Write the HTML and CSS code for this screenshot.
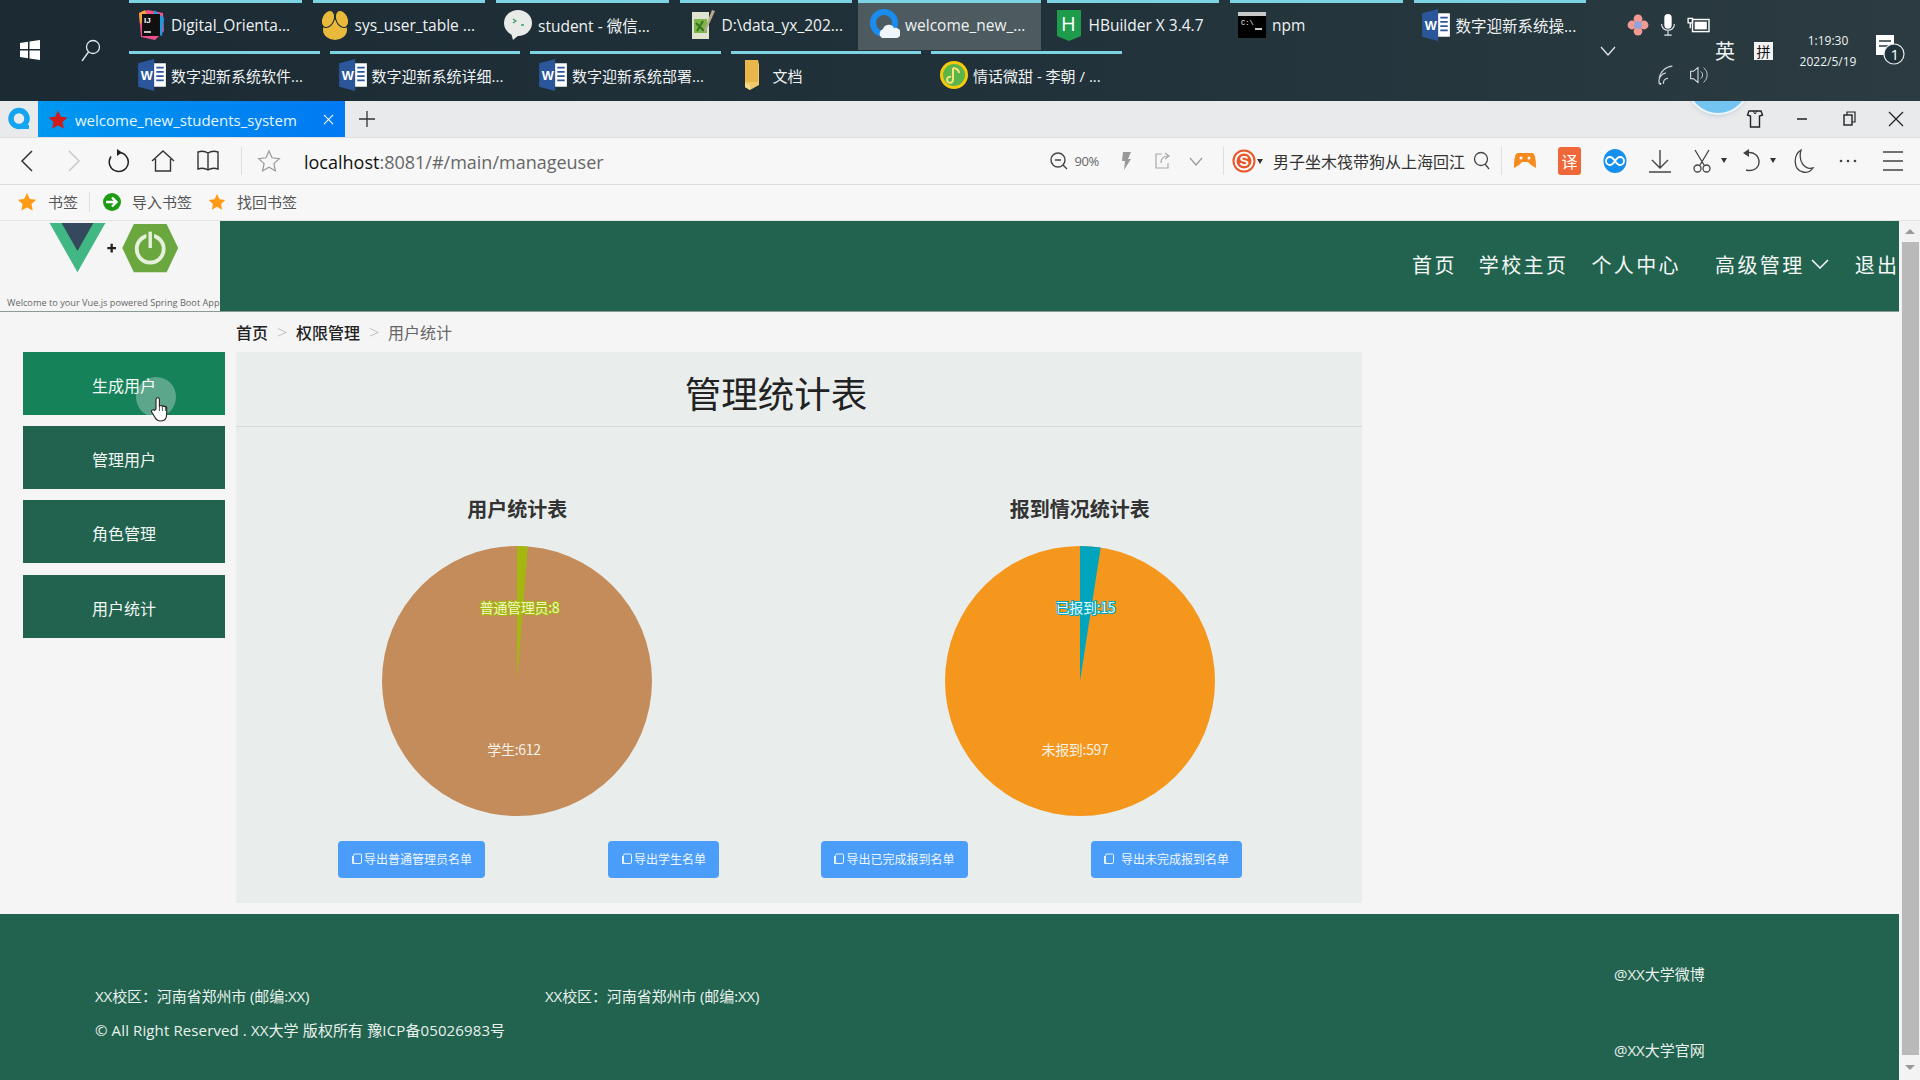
FILE: index.html
```html
<!DOCTYPE html>
<html lang="zh-CN">
<head>
<meta charset="utf-8">
<title>welcome_new_students_system</title>
<link rel="stylesheet" href="styles.css">
</head>
<body>
<svg class="defs" width="0" height="0" aria-hidden="true">
  <symbol id="word" viewBox="0 0 28 30">
    <path d="M1 4 16 0v30L1 26z" fill="#2b579a"/>
    <path d="M16 4h11v22H16z" fill="#fff"/>
    <path d="M18 8h7M18 12h7M18 16h7M18 20h7" stroke="#2b579a" stroke-width="1.6"/>
    <text x="3.5" y="20" class="word-w">W</text>
  </symbol>
  <symbol id="docs" viewBox="0 0 12 12">
    <path d="M4 1h5.500a1 1 0 0 1 1 1v7a1.500 1.500 0 0 1-1.500 1.500H4A1.500 1.500 0 0 1 2.500 9V2.500A1.500 1.500 0 0 1 4 1z" fill="none" stroke="#e8f2ff" stroke-width="1"/>
    <path d="M1.500 3v7.500h7" fill="none" stroke="#e8f2ff" stroke-width="1"/>
  </symbol>
  <symbol id="orange-star" viewBox="0 0 20 20">
    <path d="m10 1 2.800 5.900 6.400.8-4.700 4.400 1.200 6.400L10 15.400l-5.700 3.100 1.200-6.400L.8 7.700l6.400-.8z" fill="#ff9a14"/>
  </symbol>
</svg>

<div class="taskbar">
  <div class="start">
    <svg class="win" viewBox="0 0 22 22"><path d="M1 4l8-1.200V10H1zM10.500 2.600 21 1v9H10.500zM1 11.500h8v7.700l-8-1.200zM10.500 11.500H21V21l-10.500-1.600z" fill="#fff"/></svg>
    <svg class="find" viewBox="0 0 24 24"><circle cx="14" cy="9" r="6.500" fill="none" stroke="#e6eaec" stroke-width="1.300"/><path d="M9.500 14 3 23" stroke="#e6eaec" stroke-width="1.300"/></svg>
  </div>
  <div class="tasks">
    <div class="task-row row-a">
      <div class="task">
        <svg class="ticon" viewBox="0 0 30 32"><path d="M3 4 12 1l15 3 1 18-9 9-14-3z" fill="#f0508c"/><path d="M18 1l10 8-2 18-8-3z" fill="#1e9be0"/><path d="M3 4l6-3 3 8-8 6z" fill="#f6a13a"/><rect x="6" y="5" width="18" height="22" fill="#111"/><text x="8" y="14" class="ij">IJ</text><path d="M8 23h7" stroke="#fff" stroke-width="1.500"/></svg>
        <span>Digital_Orienta...</span>
      </div>
      <div class="task">
        <svg class="ticon" viewBox="0 0 30 32"><ellipse cx="15" cy="21" rx="12" ry="10" fill="#e9b93b"/><ellipse cx="8" cy="10" rx="6" ry="9" fill="#e9b93b" stroke="#1d2c34" transform="rotate(24 8 10)"/><ellipse cx="22" cy="10" rx="6" ry="9" fill="#e9b93b" stroke="#1d2c34" transform="rotate(-24 22 10)"/></svg>
        <span>sys_user_table ...</span>
      </div>
      <div class="task">
        <svg class="ticon" viewBox="0 0 30 32"><ellipse cx="15" cy="14" rx="14" ry="13" fill="#e8ebe8"/><path d="M8 24l2 7 6-5z" fill="#e8ebe8"/><path d="M10 10l3 2-3 2M18 16h3" fill="none" stroke="#3aa060" stroke-width="1.300"/></svg>
        <span>student - 微信...</span>
      </div>
      <div class="task">
        <svg class="ticon" viewBox="0 0 30 32"><path d="M5 3h17v27H5z" fill="#dfe3d0"/><path d="M7 10h13v14H7z" fill="#7ab648"/><path d="M9 14l8 8M16 12l-6 10" stroke="#3a7024" stroke-width="2"/><path d="M25 1l3 1-9 20-3 2z" fill="#b7a98a"/></svg>
        <span>D:\data_yx_202...</span>
      </div>
      <div class="task task-active">
        <svg class="ticon" viewBox="0 0 30 32"><circle cx="14" cy="14" r="11" fill="none" stroke="#1a8cf0" stroke-width="6"/><path d="M12 29a5 5 0 0 1 1-9 6 6 0 0 1 11-1 5 5 0 0 1 3 10z" fill="#eef5fb"/></svg>
        <span>welcome_new_...</span>
      </div>
      <div class="task">
        <svg class="ticon" viewBox="0 0 30 32"><path d="M3 1h24v26l-12 5-12-5z" fill="#1f9b4c"/><text x="7" y="22" class="hb">H</text></svg>
        <span>HBuilder X 3.4.7</span>
      </div>
      <div class="task">
        <svg class="ticon" viewBox="0 0 30 32"><rect x="1" y="3" width="28" height="26" fill="#000"/><rect x="1" y="3" width="28" height="4" fill="#c8c8c8"/><path d="M18 20h7" stroke="#fff" stroke-width="1.600"/><text x="4" y="16" class="cmd">C:\</text></svg>
        <span>npm</span>
      </div>
      <div class="task">
        <svg class="ticon"><use href="#word"/></svg>
        <span>数字迎新系统操...</span>
      </div>
    </div>
    <div class="task-row row-b">
      <div class="task"><svg class="ticon"><use href="#word"/></svg><span>数字迎新系统软件...</span></div>
      <div class="task"><svg class="ticon"><use href="#word"/></svg><span>数字迎新系统详细...</span></div>
      <div class="task"><svg class="ticon"><use href="#word"/></svg><span>数字迎新系统部署...</span></div>
      <div class="task">
        <svg class="ticon" viewBox="0 0 30 32"><path d="M6 1h13l1 5v20l-9 5-5-3z" fill="#f1c96a"/><path d="M6 1h13v22H6z" fill="#e9b64b"/><path d="M6 24l5 2v5l-5-3z" fill="#f5d98f"/></svg>
        <span>文档</span>
      </div>
      <div class="task">
        <svg class="ticon" viewBox="0 0 30 32"><circle cx="15" cy="16" r="14" fill="#f6c90e"/><path d="M15 5a11 11 0 0 1 0 22 11 11 0 0 1 0-22z" fill="#5bb54a"/><path d="M14 9v12a3 3 0 1 1-2-3M14 9c3 0 6 2 6 5" fill="none" stroke="#f6e37a" stroke-width="2"/></svg>
        <span>情话微甜 - 李朝 / ...</span>
      </div>
    </div>
  </div>
  <div class="tray">
    <svg class="tray-chev" viewBox="0 0 16 10"><path d="m1 1 7 8 7-8" fill="none" stroke="#e6eaec" stroke-width="1.200"/></svg>
    <div class="tray-icons">
      <div class="tray-line">
        <svg class="tray-ic" viewBox="0 0 20 20"><circle cx="10" cy="4.500" r="4" fill="#f19a94"/><circle cx="4.500" cy="10" r="4" fill="#f19a94"/><circle cx="15.500" cy="10" r="4" fill="#f19a94"/><circle cx="10" cy="15.500" r="4" fill="#f19a94"/><circle cx="10" cy="10" r="3.500" fill="#8ea4dc"/></svg>
        <svg class="tray-ic" viewBox="0 0 20 24"><rect x="6" y="0" width="8" height="16" rx="4" fill="#fff"/><path d="M3 11c0 9 14 9 14 0M10 18v5M6 23h8" fill="none" stroke="#e6eaec" stroke-width="1.200"/></svg>
        <svg class="tray-ic" viewBox="0 0 22 20"><rect x="6" y="5" width="15" height="11" fill="none" stroke="#fff" stroke-width="1.300"/><rect x="8" y="7" width="11" height="7" fill="#fff"/><path d="M2 4h4v4H2zM4 8v5" fill="none" stroke="#fff" stroke-width="1.200"/></svg>
      </div>
      <div class="tray-line">
        <span class="tray-gap"></span>
        <svg class="tray-ic" viewBox="0 0 20 20"><path d="M2 18a8 8 0 0 1 6-10M2 13a13 13 0 0 1 12-11M6 18a4 4 0 0 1 4-5" fill="none" stroke="#c8d0d4" stroke-width="1.100"/><circle cx="3" cy="18" r="1" fill="#e6eaec"/></svg>
        <svg class="tray-ic" viewBox="0 0 26 24"><path d="M5 8h3l5-4v16l-5-4H5z" fill="none" stroke="#e6eaec" stroke-width="1.100"/><path d="M16 8a5 5 0 0 1 0 8M19 4a10 10 0 0 1 0 16" fill="none" stroke="#c8d0d4" stroke-width="1"/></svg>
      </div>
    </div>
    <span class="ime">英</span>
    <span class="ime-box">拼</span>
    <div class="clock"><span>1:19:30</span><span>2022/5/19</span></div>
    <div class="notify">
      <svg class="notify-ic" viewBox="0 0 30 36"><path d="M1 2h18v20H1z" fill="#fff"/><path d="M4 8h12M4 13h12" stroke="#2a3a40" stroke-width="1.500"/><circle cx="19" cy="21" r="10" fill="#22323a" stroke="#e6eaec" stroke-width="1.200"/><text x="15.500" y="26.500" class="notify-n">1</text></svg>
    </div>
  </div>
</div>

<div class="tabstrip">
  <svg class="q-logo" viewBox="0 0 24 24"><circle cx="12" cy="11.500" r="8" fill="none" stroke="#14a4f0" stroke-width="5.500"/><path d="M15 18h7v4h-7z" fill="#14a4f0"/></svg>
  <div class="tab">
    <svg class="tab-star" viewBox="0 0 20 20"><path d="m10 .5 2.800 6.300 6.700.7-5 4.500 1.400 6.700-5.900-3.400-5.900 3.400 1.400-6.700-5-4.500 6.700-.7z" fill="#d21a16"/></svg>
    <span class="tab-title">welcome_new_students_system</span>
    <svg class="tab-x" viewBox="0 0 12 12"><path d="m1 1 10 10M11 1 1 11" stroke="#fff" stroke-width="1.100"/></svg>
  </div>
  <svg class="tab-plus" viewBox="0 0 16 16"><path d="M8 0v16M0 8h16" stroke="#333" stroke-width="1.300"/></svg>
  <div class="skin-ball"></div>
  <div class="win-ctrl">
    <svg class="wc" viewBox="0 0 20 20"><path d="M4 2h12l1.500 4-3 1V18h-9V7l-3-1z" fill="none" stroke="#222" stroke-width="1.400"/><path d="m8 2 2 3 2-3" fill="none" stroke="#222"/></svg>
    <svg class="wc" viewBox="0 0 20 20"><path d="M5 10h10" stroke="#222" stroke-width="1.500"/></svg>
    <svg class="wc" viewBox="0 0 20 20"><rect x="5" y="6" width="8" height="10" fill="none" stroke="#222" stroke-width="1.400"/><path d="M8 6V3h8v10h-3" fill="none" stroke="#222" stroke-width="1.200"/></svg>
    <svg class="wc" viewBox="0 0 20 20"><path d="m3 3 14 14M17 3 3 17" stroke="#222" stroke-width="1.300"/></svg>
  </div>
</div>

<div class="toolbar">
  <div class="slot"><svg class="ic" viewBox="0 0 24 24"><path d="M16 2 6 12l10 10" fill="none" stroke="#333" stroke-width="1.500"/></svg></div>
  <div class="slot"><svg class="ic" viewBox="0 0 24 24"><path d="m8 2 10 10L8 22" fill="none" stroke="#c9c9c9" stroke-width="1.500"/></svg></div>
  <div class="slot"><svg class="ic" viewBox="0 0 24 24"><path d="M13 3.500a9.500 9.500 0 1 1-8 4" fill="none" stroke="#222" stroke-width="1.500"/><path d="m11 0 5 3.500-5 3.500z" fill="#222"/></svg></div>
  <div class="slot"><svg class="ic" viewBox="0 0 24 24"><path d="M1 12 12 2l11 10M4.500 10v12h15V10" fill="none" stroke="#333" stroke-width="1.400"/></svg></div>
  <div class="slot"><svg class="ic" viewBox="0 0 24 24"><path d="M12 4C9 2 5 2 2 3v17c3-1 7-1 10 1 3-2 7-2 10-1V3c-3-1-7-1-10 1zM12 4v17" fill="none" stroke="#333" stroke-width="1.400"/></svg></div>
  <span class="sep sep-a"></span>
  <svg class="ic star-ic" viewBox="0 0 24 24"><path d="m12 2 3 6.800 7.300.8-5.400 5 1.500 7.300-6.400-3.700-6.400 3.700L7.100 14.600l-5.400-5 7.300-.8z" fill="none" stroke="#999" stroke-width="1.200"/></svg>
  <div class="url"><b>localhost</b>:8081/#/main/manageuser</div>
  <div class="tools">
    <svg class="ic-s" viewBox="0 0 20 20"><circle cx="9" cy="9" r="7" fill="none" stroke="#444" stroke-width="1.400"/><path d="M6 9h6M14 14l4 4" stroke="#444" stroke-width="1.400"/></svg>
    <span class="zoom-val">90%</span>
    <svg class="ic-s bolt" viewBox="0 0 20 20"><path d="M7 1h8l-3 7h3L8 19l1-9H6z" fill="#999"/></svg>
    <svg class="ic-s share" viewBox="0 0 20 20"><path d="M10 3H4v14h12v-5M9 12c0-5 3-7 7-7M13 2l4 3-4 3" fill="none" stroke="#aaa" stroke-width="1.200"/></svg>
    <svg class="ic-s down" viewBox="0 0 20 20"><path d="m4 7 6 7 6-7" fill="none" stroke="#999" stroke-width="1.200"/></svg>
    <span class="sep sep-b"></span>
    <svg class="sogou" viewBox="0 0 24 24"><circle cx="12" cy="12" r="10.500" fill="#fff" stroke="#e8562a" stroke-width="2"/><circle cx="12" cy="12" r="7.500" fill="#e8562a"/><text x="7.500" y="17" class="sogou-s">S</text></svg>
    <span class="caret"></span>
    <span class="search-text">男子坐木筏带狗从上海回江</span>
    <svg class="ic-s mag" viewBox="0 0 20 20"><circle cx="9" cy="8" r="6.500" fill="none" stroke="#444" stroke-width="1.300"/><path d="m13 13 4 5" stroke="#444" stroke-width="1.300"/></svg>
    <span class="sep sep-c"></span>
    <div class="slot"><svg class="ic" viewBox="0 0 24 24"><path d="M5 4h14c3 0 4 6 4 15l-5-3-3-3H9l-3 3-5 3C1 10 2 4 5 4z" fill="#f58a1f"/><circle cx="8" cy="9" r="1.500" fill="#fff"/><circle cx="16" cy="9" r="1.500" fill="#fff"/></svg></div>
    <div class="slot"><span class="fanyi">译</span></div>
    <div class="slot"><svg class="ic" viewBox="0 0 24 24"><ellipse cx="12" cy="12" rx="11.500" ry="12" fill="#1690ee"/><path d="M12 12c-2-3-3-4-5-4a4 4 0 0 0 0 8c2 0 3-1 5-4s3-4 5-4a4 4 0 0 1 0 8c-2 0-3-1-5-4z" fill="none" stroke="#fff" stroke-width="1.800"/></svg></div>
    <div class="slot slot-dl"><svg class="ic" viewBox="0 0 24 24"><path d="M12 1v17M4 11l8 8 8-8M1 23h22" fill="none" stroke="#444" stroke-width="1.400"/></svg></div>
    <div class="slot slot-cut"><svg class="ic" viewBox="0 0 24 24"><path d="M5 1l9 15M19 1l-9 15" fill="none" stroke="#444" stroke-width="1.300"/><circle cx="7.500" cy="19.500" r="3.500" fill="none" stroke="#444" stroke-width="1.300"/><circle cx="16.500" cy="19.500" r="3.500" fill="none" stroke="#444" stroke-width="1.300"/></svg><span class="caret caret-t"></span></div>
    <div class="slot slot-u"><svg class="ic" viewBox="0 0 24 24"><path d="M6 4c8-2 13 3 13 9s-6 10-13 8" fill="none" stroke="#444" stroke-width="1.400"/><path d="M9 0v8L3 4z" fill="#444"/></svg><span class="caret caret-t"></span></div>
    <div class="slot"><svg class="ic" viewBox="0 0 24 24"><path d="M10 1c-8 5-8 20 2 22 4 1 8-1 10-4-9 2-15-7-12-18z" fill="none" stroke="#444" stroke-width="1.300"/></svg></div>
    <div class="slot"><svg class="ic" viewBox="0 0 24 24"><circle cx="5" cy="12" r="1.300" fill="#444"/><circle cx="12" cy="12" r="1.300" fill="#444"/><circle cx="19" cy="12" r="1.300" fill="#444"/></svg></div>
    <div class="slot"><svg class="ic" viewBox="0 0 24 24"><path d="M2 3h20M2 12h20M2 21h20" stroke="#444" stroke-width="1.500"/></svg></div>
  </div>
</div>

<div class="bookmarks">
  <svg class="bm-star"><use href="#orange-star"/></svg>
  <span class="bm-text">书签</span>
  <span class="sep sep-d"></span>
  <svg class="bm-go" viewBox="0 0 20 20"><circle cx="10" cy="10" r="9" fill="#1e9b14"/><path d="M4 10h10M10 5.500 14.500 10 10 14.500" fill="none" stroke="#fff" stroke-width="2.400"/></svg>
  <span class="bm-text">导入书签</span>
  <svg class="bm-star bm-star-b"><use href="#orange-star"/></svg>
  <span class="bm-text">找回书签</span>
</div>

<div class="page">
  <div class="site">
    <header class="site-head">
      <div class="brand">
        <svg class="brand-art" viewBox="0 0 140 55"><path d="M.5 0h58L29.500 51z" fill="#41b883"/><path d="M13 0h33L29.500 29z" fill="#35495e"/><path d="M60.500 26h9M65 21.500v9" stroke="#222" stroke-width="2.400"/><path d="M76 26 88 1h34l12 25-12 25H88z" fill="#6aa83f"/><circle cx="105" cy="27" r="14" fill="none" stroke="#e7f0dc" stroke-width="4"/><path d="M105 10v17" stroke="#6aa83f" stroke-width="8"/><path d="M105 9v17" stroke="#e7f0dc" stroke-width="3.500"/></svg>
        <span class="brand-cap">Welcome to your Vue.js powered Spring Boot App</span>
      </div>
      <nav class="site-nav">
        <a class="n-home">首页</a>
        <a class="n-school">学校主页</a>
        <a class="n-me">个人中心</a>
        <a class="n-admin">高级管理<svg class="nav-chev" viewBox="0 0 18 10"><path d="m1 1 8 8 8-8" fill="none" stroke="#fff" stroke-width="1.500"/></svg></a>
        <a class="n-exit">退出</a>
      </nav>
    </header>

    <div class="site-body">
      <aside class="side">
        <a class="side-btn side-hover">生成用户
          <span class="click-ring"></span>
          <svg class="hand" viewBox="0 0 18 26"><path d="M5 13V3.500a1.700 1.700 0 0 1 3.400 0V10l1-.3a1.600 1.600 0 0 1 2 .4 1.600 1.600 0 0 1 2 .5 1.600 1.600 0 0 1 2.300 1V18c0 4-2 7-6 7-3 0-4.500-1-6-4l-3-5c-.8-1.800 1.500-3 2.800-1.500z" fill="#fff" stroke="#222" stroke-width="1.100"/><path d="M8.400 10v5M11.400 10v5M14.400 11v4" stroke="#222" stroke-width=".8"/></svg>
        </a>
        <a class="side-btn">管理用户</a>
        <a class="side-btn">角色管理</a>
        <a class="side-btn">用户统计</a>
      </aside>
      <main class="main">
        <div class="crumbs">
          <span class="crumb-strong">首页</span><span class="crumb-sep">&gt;</span><span class="crumb-strong">权限管理</span><span class="crumb-sep">&gt;</span><span class="crumb-last">用户统计</span>
        </div>
        <section class="panel">
          <h1 class="panel-title">管理统计表</h1>
          <div class="charts">
            <div class="chart">
              <h2 class="chart-title">用户统计表</h2>
              <svg class="pie" viewBox="0 0 272 272">
                <circle cx="136" cy="136" r="135" fill="#c48c5b"/>
                <path d="M136 136 136 1A135 135 0 0 1 146.830 1.440z" fill="#a5b70f"/>
                <text x="138.500" y="68" class="pie-label halo-lime">普通管理员:8</text>
                <text x="133" y="210" class="pie-label">学生:612</text>
              </svg>
              <div class="chart-actions actions-a">
                <button class="export w147"><svg class="doc"><use href="#docs"/></svg>导出普通管理员名单</button>
                <button class="export w111"><svg class="doc"><use href="#docs"/></svg>导出学生名单</button>
              </div>
            </div>
            <div class="chart">
              <h2 class="chart-title">报到情况统计表</h2>
              <svg class="pie" viewBox="0 0 272 272">
                <circle cx="136" cy="136" r="135" fill="#f5971d"/>
                <path d="M136 136 136 1A135 135 0 0 1 156.700 2.600z" fill="#00a5bd"/>
                <text x="141.500" y="68" class="pie-label halo-cyan">已报到:15</text>
                <text x="131" y="210" class="pie-label">未报到:597</text>
              </svg>
              <div class="chart-actions actions-b">
                <button class="export w147"><svg class="doc"><use href="#docs"/></svg>导出已完成报到名单</button>
                <button class="export w151"><svg class="doc doc-wide"><use href="#docs"/></svg>导出未完成报到名单</button>
              </div>
            </div>
          </div>
        </section>
      </main>
    </div>

    <footer class="site-foot">
      <div class="foot-left">
        <div class="foot-line foot-tight"><span class="foot-cell">XX校区：河南省郑州市 (邮编:XX)</span><span>XX校区：河南省郑州市 (邮编:XX)</span></div>
        <div class="foot-line foot-wide">© All Right Reserved . XX大学 版权所有 豫ICP备05026983号</div>
      </div>
      <div class="foot-right">
        <span>@XX大学微博</span>
        <span>@XX大学官网</span>
      </div>
    </footer>
  </div>
  <div class="scrollbar">
    <span class="sb-up"></span>
    <span class="sb-thumb"></span>
    <span class="sb-down"></span>
  </div>
</div>
</body>
</html>
```

FILE: styles.css
```css
* { box-sizing: border-box; }
html, body { margin: 0; height: 100%; }
body {
  width: 1920px;
  height: 1080px;
  overflow: hidden;
  background: #f5f5f5;
  font-family: "Open Sans", "Noto Sans CJK SC", sans-serif;
  color: #222;
}
.defs { display: none; }
svg { display: block; flex: none; }
a { display: block; }

/* Windows taskbar */
.taskbar {
  height: 101px;
  display: flex;
  background: linear-gradient(90deg, #1b2a33 0%, #22323a 55%, #2b3b41 100%);
  color: #eef2f3;
  font-size: 15.500px;
}
.start { width: 129px; display: flex; align-items: center; flex: none; padding: 0 0 2px 19px; }
.win { width: 22px; height: 22px; }
.find { width: 24px; height: 24px; margin-left: 38px; }
.tasks { width: 1466px; flex: none; }
.task-row { display: flex; }
.row-a { height: 51px; gap: 11px; }
.row-b { height: 50px; gap: 10px; }
.task {
  display: flex;
  align-items: center;
  gap: 5px;
  padding: 0 0 3px 7px;
  border-top: 3px solid #7dd3e2;
  white-space: nowrap;
}
.row-a .task { width: 172.500px; height: 50px; }
.row-b .task { width: 190.500px; height: 50px; padding: 0 0 5px 8px; gap: 4px; font-size: 15px; }
.task-active { background: #4d5b60; margin: 0 -5px; padding-left: 12px !important; width: 182.500px !important; }
.ticon { width: 30px; height: 32px; }
.ij { font: 700 8px "Liberation Sans", sans-serif; fill: #fff; }
.hb { font: 400 20px "Open Sans", sans-serif; fill: #fff; }
.cmd { font: 400 7px "Liberation Mono", monospace; fill: #fff; }
.word-w { font: 700 12px "Liberation Sans", sans-serif; fill: #fff; }

.tray { flex: 1; display: flex; align-items: center; position: relative; }
.tray-chev { width: 16px; height: 10px; margin: 0 0 0 5px; }
.tray-icons { width: 90px; margin-left: 7px; display: flex; flex-direction: column; height: 101px; justify-content: space-between; padding: 14px 0 15px; }
.tray-line { display: flex; }
.tray-gap { width: 30px; flex: none; }
.tray-ic { width: 30px; height: 22px; }
.ime { font-size: 20px; width: 22px; margin-left: 1px; text-align: center; font-family: "Noto Sans CJK SC", sans-serif; }
.ime-box { width: 19px; height: 18px; background: #f3f3f3; color: #111; font: 14px/18px "Noto Sans CJK SC", sans-serif; text-align: center; margin-left: 18px; }
.clock { width: 84px; margin-left: 13px; display: flex; flex-direction: column; align-items: center; gap: 4px; font-size: 12px; line-height: 17px; padding-top: 1px; }
.notify-ic { width: 30px; height: 36px; }
.notify-n { font: 400 15px "Open Sans", sans-serif; fill: #fff; }
.notify { margin-left: 5px; }

/* Browser tabs */
.tabstrip { height: 37px; background: #e9eaec; display: flex; align-items: center; position: relative; border-bottom: 1px solid #dfdfdf; overflow: hidden; }
.q-logo { width: 24px; height: 24px; margin-left: 7px; }
.tab { width: 307px; height: 36px; margin-left: 7px; background: linear-gradient(90deg, #0098f0, #0079f2); display: flex; align-items: center; color: #e8f6ff; font-size: 15px; padding-top: 1px; }
.tab-star { width: 20px; height: 20px; margin-left: 10px; }
.tab-title { margin-left: 7px; width: 243px; white-space: nowrap; }
.tab-x { width: 11px; height: 11px; margin-left: 5px; }
.tab-plus { width: 16px; height: 16px; margin-left: 14px; }
.skin-ball { position: absolute; left: 1688px; top: -48px; width: 60px; height: 60px; border-radius: 50%; background: #74c4f2; box-shadow: 0 0 0 2px #eef6fb, 0 2px 5px rgba(120, 160, 190, .5); }
.win-ctrl { margin-left: auto; display: flex; gap: 27px; padding-right: 14px; }
.wc { width: 20px; height: 20px; }

/* Toolbar */
.toolbar { height: 47px; background: #f7f7f7; border-bottom: 1px solid #dcdcdc; display: flex; align-items: center; padding: 0 5px 0 5px; }
.slot { width: 45px; display: flex; align-items: center; justify-content: center; flex: none; position: relative; }
.ic { width: 24px; height: 24px; }
.ic-s { width: 20px; height: 20px; }
.sep { display: block; width: 1px; background: #dedede; flex: none; }
.sep-a { height: 28px; margin-left: 11px; }
.star-ic { margin-left: 15px; }
.url { margin-left: 23px; font-size: 18px; color: #666; white-space: nowrap; padding-top: 1px; }
.url b { font-weight: 400; color: #111; }
.tools { margin-left: auto; display: flex; align-items: center; }
.zoom-val { font-size: 13px; color: #666; margin: 0 0 0 6px; width: 27px; white-space: nowrap; letter-spacing: -.4px; }
.bolt { margin-left: 14.500px; }
.share { margin-left: 16px; }
.down { margin-left: 14px; }
.sep-b { height: 28px; margin-left: 17px; }
.sogou { width: 24px; height: 24px; margin-left: 8px; }
.sogou-s { font: 700 14px "Liberation Sans", sans-serif; fill: #fff; }
.caret { display: block; width: 0; height: 0; border: 3.500px solid transparent; border-top: 5px solid #333; border-bottom: 0; flex: none; margin-left: 1px; }
.caret-t { position: absolute; right: -3px; top: 9px; }
.search-text { font-size: 16px; line-height: 24px; color: #333; margin-left: 10px; width: 193px; white-space: nowrap; font-family: "Noto Sans CJK SC", sans-serif; }
.mag { margin-left: 6px; }
.sep-c { height: 28px; margin-left: 9px; }
.fanyi { width: 23px; height: 28px; border-radius: 3px; background: #f0683a; color: #fff; font: 16px/28px "Noto Sans CJK SC", sans-serif; text-align: center; }
.slot-dl { margin-right: -3px; }
.slot-cut { margin-right: 7px; }
.slot-u { width: 42px; margin-right: 7px; }

/* Bookmarks */
.bookmarks { height: 36px; background: #f7f7f7; border-bottom: 1px solid #e4e4e4; display: flex; align-items: center; font-size: 15px; color: #555; padding: 0 0 2px 17px; font-family: "Noto Sans CJK SC", sans-serif; }
.bm-star { width: 20px; height: 20px; }
.bm-star-b { width: 18px; height: 18px; margin-left: 16px; }
.bm-text { margin-left: 11px; white-space: nowrap; }
.sep-d { height: 20px; margin-left: 11px; }
.bm-go { width: 20px; height: 20px; margin-left: 12px; }
.bookmarks > .bm-go + .bm-text { margin-left: 10px; }

/* Page */
.page { height: 859px; display: flex; }
.site { width: 1899px; flex: none; display: flex; flex-direction: column; }
.site-head { height: 91px; display: flex; background: #22634f; border-bottom: 1px solid #8a9a94; }
.brand { width: 220px; flex: none; background: #f5f5f5; position: relative; overflow: hidden; padding: 2px 0 0 49px; }
.brand-art { width: 135px; height: 53px; }
.brand-cap { position: absolute; left: 7px; top: 75px; font-size: 9.200px; line-height: 14px; color: #666; white-space: nowrap; }
.site-nav { flex: 1; position: relative; display: flex; align-items: center; color: #f4f7f5; font-size: 20px; letter-spacing: 2.400px; font-family: "Noto Sans CJK SC", sans-serif; font-weight: 400; white-space: nowrap; padding: 0 0 4px 0; }
.n-home { margin-left: 1192px; }
.n-school { margin-left: 22px; }
.n-me { margin-left: 23px; }
.n-admin { margin-left: 34px; display: flex; align-items: center; }
.nav-chev { width: 18px; height: 10px; margin-left: 6px; }
.n-exit { margin-left: 26px; }

.site-body { height: 602px; display: flex; padding-left: 23px; }
.side { width: 202px; flex: none; padding-top: 40px; display: flex; flex-direction: column; gap: 11.200px; }
.side-btn { height: 63px; background: #22634f; color: #f2f7f5; font-size: 16px; line-height: 66px; text-align: center; font-family: "Noto Sans CJK SC", sans-serif; }
.side-hover { background: #16825a; position: relative; line-height: 66px; }
.click-ring { position: absolute; left: 113px; top: 25px; width: 40px; height: 40px; border-radius: 50%; background: rgba(255, 255, 255, .3); }
.hand { position: absolute; left: 128px; top: 44px; width: 18px; height: 26px; }
.main { width: 1126px; flex: none; margin-left: 11px; }
.crumbs { height: 40px; display: flex; align-items: center; font-size: 16px; font-family: "Noto Sans CJK SC", sans-serif; }
.crumb-strong { font-weight: 500; color: #222; }
.crumb-sep { width: 28px; text-align: center; color: #b5b5b5; font-family: "Open Sans", sans-serif; font-size: 18px; font-weight: 300; }
.crumb-last { color: #666; }
.panel { height: 551px; background: #e9eeed; }
.panel-title { margin: 0; height: 75px; font-size: 36.500px; line-height: 82px; font-weight: 400; text-align: center; color: #222; border-bottom: 1px solid #d5d9d8; font-family: "Noto Sans CJK SC", sans-serif; padding-right: 46px; }
.charts { display: flex; padding-top: 69px; }
.chart { width: 562.500px; display: flex; flex-direction: column; align-items: center; }
.chart-title { margin: 0; font-size: 20px; line-height: 26px; font-weight: 700; color: #333; font-family: "Noto Sans CJK SC", sans-serif; }
.pie { width: 272px; height: 272px; margin-top: 23px; }
.pie-label { font: 14px "Noto Sans CJK SC", sans-serif; fill: #f4f2e8; text-anchor: middle; letter-spacing: -.3px; }
.halo-lime { fill: #f2f7c4; stroke: #a5b70f; stroke-width: 2px; paint-order: stroke; }
.halo-cyan { fill: #e4fbff; stroke: #00a5bd; stroke-width: 2px; paint-order: stroke; }
.chart-actions { width: 100%; display: flex; gap: 123px; margin-top: 24px; }
.actions-a { padding-left: 102px; }
.actions-b { padding-left: 22px; }
.export { height: 37px; border: 0; border-radius: 4px; background: #4a9efa; color: #eef6ff; font: 12px/33px "Noto Sans CJK SC", sans-serif; display: flex; align-items: center; justify-content: center; gap: 1px; padding: 0 0 2px; white-space: nowrap; }
.w147 { width: 147px; }
.w111 { width: 111px; }
.w151 { width: 151px; }
.doc { width: 12px; height: 12px; }
.doc-wide { margin-right: 5px; }

.site-foot { height: 166px; background: #22634f; color: #e9f1ed; font-size: 15px; display: flex; font-family: "Open Sans", "Noto Sans CJK SC", sans-serif; }
.foot-left { padding: 69px 0 0 95px; width: 1614px; flex: none; }
.foot-line { display: flex; height: 34px; line-height: 26px; white-space: nowrap; }
.foot-tight { letter-spacing: -.1px; }
.foot-wide { letter-spacing: .12px; }
.foot-cell { width: 450px; }
.foot-right { padding-top: 47px; display: flex; flex-direction: column; gap: 50px; line-height: 26px; white-space: nowrap; }

.scrollbar { flex: 1; background: #f3f3f3; display: flex; flex-direction: column; align-items: center; padding-top: 8px; }
.sb-up, .sb-down { display: block; width: 0; height: 0; border: 5px solid transparent; flex: none; }
.sb-up { border-bottom: 5px solid #9a9a9a; border-top: 0; }
.sb-thumb { display: block; width: 17px; height: 813px; background: #b9b9b9; margin-top: 8px; margin-left: 1px; flex: none; }
.sb-down { border-top: 5px solid #9a9a9a; border-bottom: 0; margin-top: 10px; }
```
